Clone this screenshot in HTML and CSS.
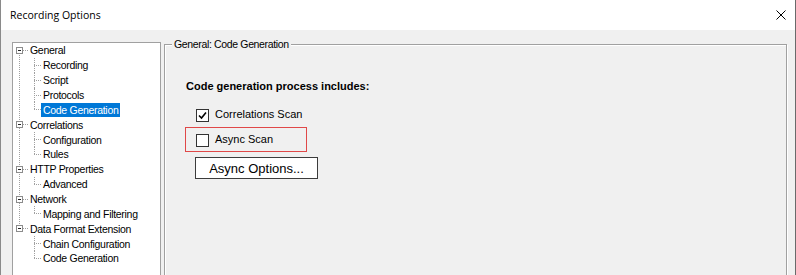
FILE: index.html
```html
<!DOCTYPE html>
<html>
<head>
  <meta charset="UTF-8">
  <title>Recording Options</title>
  <link rel="stylesheet" href="styles.css">
</head>
<body>
  <div class="window">
    <div class="titlebar">
      <span class="title">Recording Options</span>
      <svg class="close" width="10" height="10" viewBox="0 0 10 10">
        <path d="M0.5 0.5 L9.5 9.5 M9.5 0.5 L0.5 9.5" stroke="#000" stroke-width="1" fill="none"/>
      </svg>
    </div>

    <div class="content">
      <div class="tree-box">
        <ul class="tree">
          <li>
            <div class="row root"><span class="exp"></span><span class="dash"></span><span class="label">General</span></div>
            <ul class="children">
              <li><div class="row child"><span class="dash long"></span><span class="label">Recording</span></div></li>
              <li><div class="row child"><span class="dash long"></span><span class="label">Script</span></div></li>
              <li><div class="row child"><span class="dash long"></span><span class="label">Protocols</span></div></li>
              <li><div class="row child"><span class="dash long"></span><span class="label selected">Code Generation</span></div></li>
            </ul>
          </li>
          <li>
            <div class="row root"><span class="exp"></span><span class="dash"></span><span class="label">Correlations</span></div>
            <ul class="children">
              <li><div class="row child"><span class="dash long"></span><span class="label">Configuration</span></div></li>
              <li><div class="row child"><span class="dash long"></span><span class="label">Rules</span></div></li>
            </ul>
          </li>
          <li>
            <div class="row root"><span class="exp"></span><span class="dash"></span><span class="label">HTTP Properties</span></div>
            <ul class="children">
              <li><div class="row child"><span class="dash long"></span><span class="label">Advanced</span></div></li>
            </ul>
          </li>
          <li>
            <div class="row root"><span class="exp"></span><span class="dash"></span><span class="label">Network</span></div>
            <ul class="children">
              <li><div class="row child"><span class="dash long"></span><span class="label">Mapping and Filtering</span></div></li>
            </ul>
          </li>
          <li>
            <div class="row root"><span class="exp"></span><span class="dash"></span><span class="label">Data Format Extension</span></div>
            <ul class="children">
              <li><div class="row child"><span class="dash long"></span><span class="label">Chain Configuration</span></div></li>
              <li><div class="row child"><span class="dash long"></span><span class="label">Code Generation</span></div></li>
            </ul>
          </li>
        </ul>
      </div>

      <fieldset class="group">
        <legend>General: Code Generation</legend>
        <div class="group-body">
          <div class="heading">Code generation process includes:</div>

          <div class="check-row first">
            <span class="checkbox">
              <svg width="11" height="11" viewBox="0 0 11 11">
                <path d="M2 5.5 L4.5 8 L9 2.5" stroke="#000" stroke-width="1.6" fill="none"/>
              </svg>
            </span>
            <span class="check-label">Correlations Scan</span>
          </div>

          <div class="highlight">
            <div class="check-row">
              <span class="checkbox"></span>
              <span class="check-label">Async Scan</span>
            </div>
          </div>

          <button type="button" class="btn">Async Options...</button>
        </div>
      </fieldset>
    </div>
  </div>
</body>
</html>
```

FILE: styles.css
```css
body {
  margin: 0;
  background: #f0f0f0;
}
.window {
  width: 796px;
  height: 275px;
  box-sizing: border-box;
  border-left: 1px solid #8a8a8a;
  border-right: 1px solid #6a6a6a;
  overflow: hidden;
  display: flex;
  flex-direction: column;
}
.titlebar {
  height: 30px;
  flex: none;
  background: #fff;
  display: flex;
  align-items: center;
  justify-content: space-between;
  padding: 0 9px 0 9px;
}
.title {
  font-family: "Open Sans", "Liberation Sans", sans-serif;
  font-size: 10.5px;
  color: #000;
}
.close {
  display: block;
}

.content {
  flex: 1;
  display: flex;
  align-items: flex-start;
  gap: 3px;
  padding: 8px 8px 0 11px;
  background: #f0f0f0;
}

/* tree view */
.tree-box {
  width: 149px;
  height: 260px;
  flex: none;
  margin-top: 4px;
  box-sizing: border-box;
  background: #fff;
  border: 1px solid #a0a0a0;
  font-family: "Liberation Sans", Arial, sans-serif;
  font-size: 10.5px;
  letter-spacing: -0.3px;
  color: #000;
}
.tree, .children {
  list-style: none;
  margin: 0;
  padding: 0;
}
.tree li {
  position: relative;
}
.tree > li:not(:last-child)::before {
  content: "";
  position: absolute;
  left: 6px;
  top: 7px;
  bottom: -7px;
  border-left: 1px dotted #a0a0a0;
}
.children > li::before {
  content: "";
  position: absolute;
  left: 21px;
  top: 0;
  bottom: 0;
  border-left: 1px dotted #a0a0a0;
}
.children > li:last-child::before {
  bottom: auto;
  height: 7px;
}
.row {
  height: 14.86px;
  display: flex;
  align-items: center;
}
.row.root {
  padding-left: 3px;
}
.row.child {
  padding-left: 21px;
}
.exp {
  position: relative;
  width: 7px;
  height: 7px;
  box-sizing: border-box;
  border: 1px solid #8c8c8c;
  background: linear-gradient(#222, #222) center / 3px 1px no-repeat, #fff;
}
.dash {
  width: 5px;
  height: 0;
  border-top: 1px dotted #a0a0a0;
}
.dash.long {
  width: 7px;
}
.label {
  padding: 0 2px;
  line-height: 14px;
  white-space: nowrap;
}
.label.selected {
  background: #0078d7;
  color: #fff;
}

/* group box */
.group {
  flex: 1;
  min-width: 0;
  height: 260px;
  margin: 0;
  padding: 0;
  border: 1px solid #a0a0a0;
  box-shadow: inset 1px 1px 0 #fff, 1px 1px 0 #fff;
}
.group legend {
  margin-left: 7px;
  padding: 0 2px;
  line-height: 13px;
  background: #f0f0f0;
  font-family: "Liberation Sans", Arial, sans-serif;
  font-size: 10.5px;
  letter-spacing: -0.35px;
  color: #000;
}
.group-body {
  padding-left: 20px;
  font-family: "Liberation Sans", Arial, sans-serif;
  font-size: 11px;
  color: #000;
}
.heading {
  margin: 29px 0 0 1px;
  font-weight: bold;
  line-height: 13px;
}
.check-row {
  display: flex;
  align-items: center;
  height: 13px;
}
.check-row.first {
  margin: 16px 0 0 11px;
}
.checkbox {
  width: 13px;
  height: 13px;
  box-sizing: border-box;
  border: 1px solid #333;
  background: #fff;
  display: flex;
  align-items: center;
  justify-content: center;
}
.checkbox svg {
  display: block;
}
.check-label {
  margin-left: 6px;
  padding-bottom: 2px;
  line-height: 13px;
}
.highlight {
  width: 122px;
  height: 25px;
  box-sizing: border-box;
  margin-top: 5px;
  padding: 6px 0 0 10px;
  border: 1px solid #e04848;
}
.btn {
  display: block;
  margin: 5px 0 0 10px;
  width: 123px;
  height: 22px;
  padding: 0;
  border: 1px solid #3c3c3c;
  background: #fff;
  font-family: "Liberation Sans", Arial, sans-serif;
  font-size: 13px;
  color: #000;
}
```
